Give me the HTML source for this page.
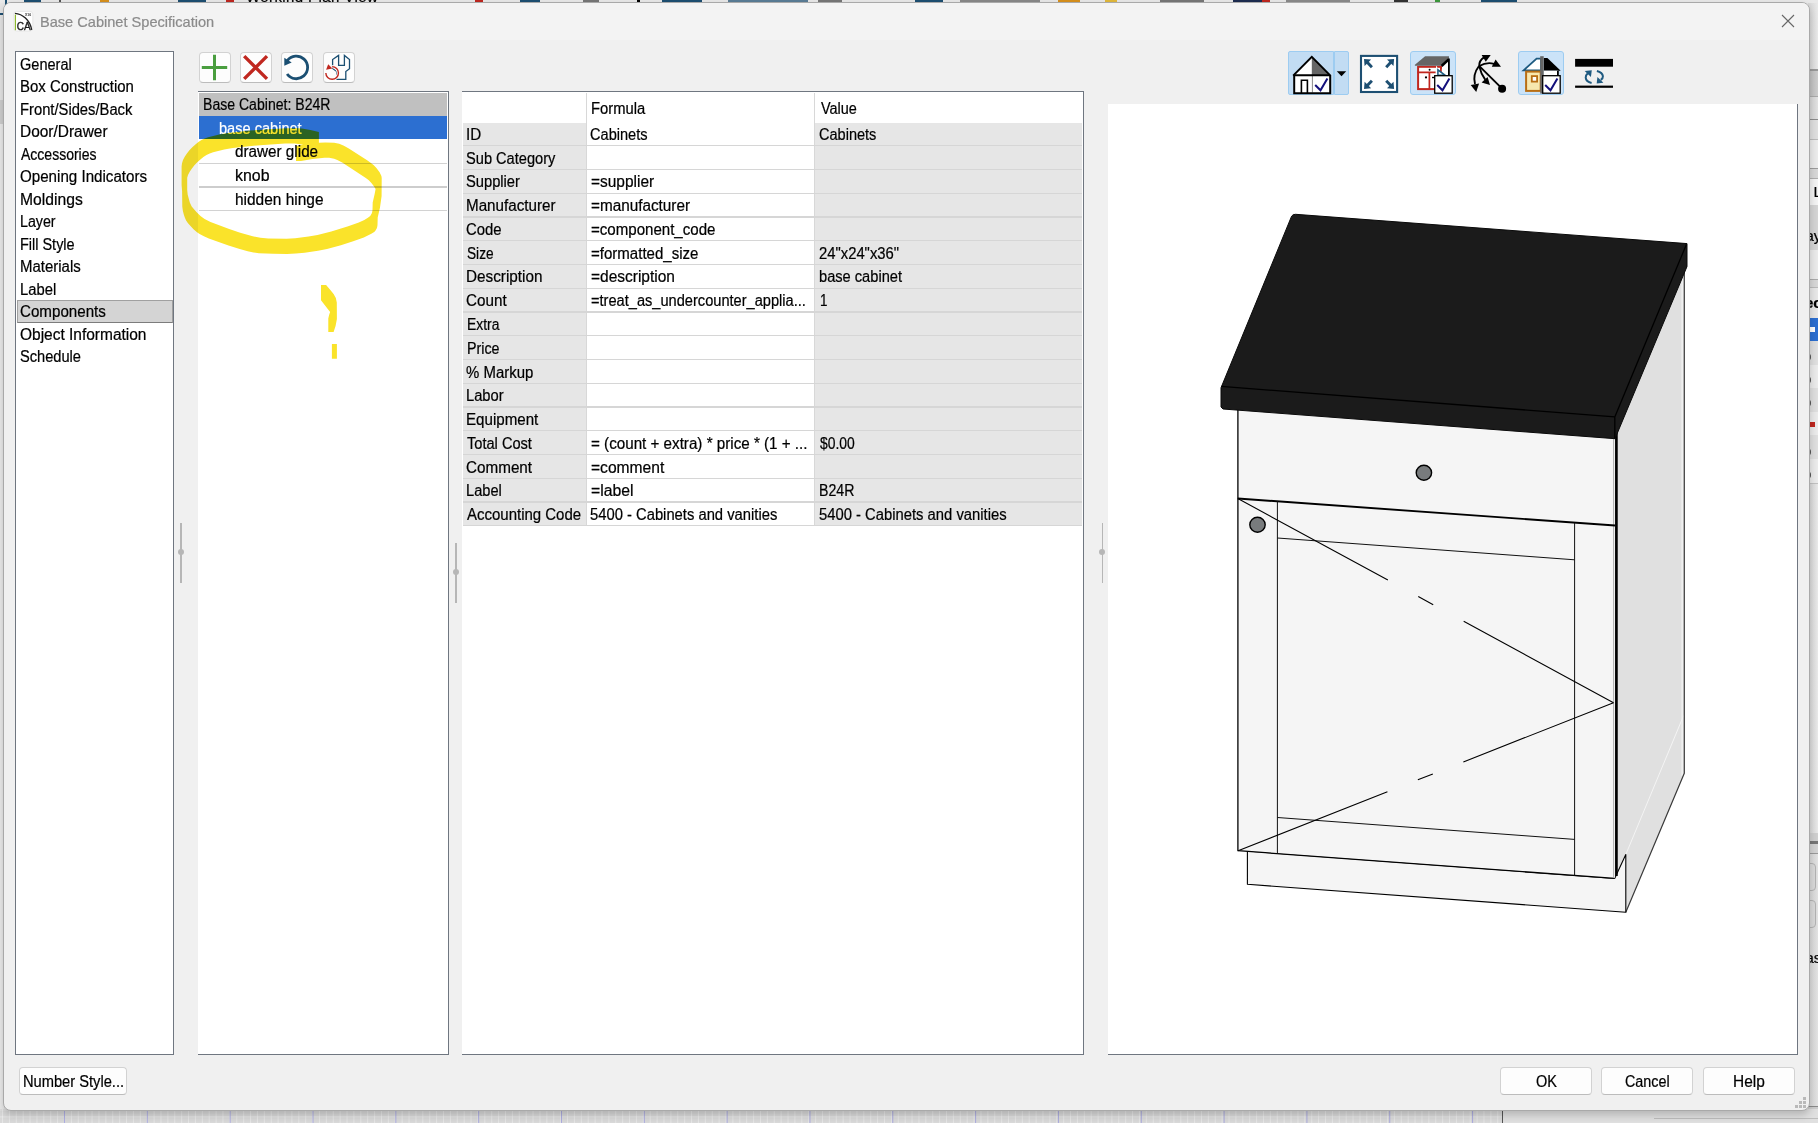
<!DOCTYPE html>
<html lang="en"><head><meta charset="utf-8"><title>Base Cabinet Specification</title>
<style>
html,body{margin:0;padding:0}
body{width:1818px;height:1123px;position:relative;overflow:hidden;background:#e4e4e4;font:16px/20px "Liberation Sans",sans-serif;color:#000}
.a{position:absolute}
.t{position:absolute;white-space:pre;transform-origin:0 0;font:16px/20px "Liberation Sans",sans-serif;-webkit-text-stroke:.22px currentColor}
#dlg{position:absolute;left:3px;top:2px;width:1805px;height:1107px;border:1px solid #a9a9a9;border-radius:8px;background:#f0f0f0;box-shadow:0 4px 9px rgba(0,0,0,.2)}
#ttl{position:absolute;left:4px;top:3px;width:1805px;height:37px;background:#f3f3f3;border-radius:7px 7px 0 0}
.pane{position:absolute;background:#fff;box-sizing:border-box;border-top:1px solid #6f7680;border-right:1px solid #6f7680;border-bottom:1px solid #6f7680}
.btn{position:absolute;box-sizing:border-box;background:#fdfdfd;border:1px solid #d2d2d2;border-bottom-color:#bcbcbc;border-radius:4px}
.g{position:absolute;background:#e6e6e6}
.hl{position:absolute;height:1px;background:#d6d6d6}
.sp{position:absolute;background:#b6b6b6}
.tb{position:absolute;box-sizing:border-box;background:#cbe3f8;border:1px solid #9dccf1;border-radius:3px}
svg{position:absolute;left:0;top:0;overflow:visible}

</style></head>
<body>
<!-- background application peeking around the dialog -->
<div class="a" style="left:0;top:0;width:1818px;height:3px;background:#e9e9e9"></div>
<div class="a" style="left:24px;top:0;width:17px;height:2px;background:#1d4f72"></div>
<div class="a" style="left:59px;top:0;width:2px;height:2px;background:#555"></div>
<div class="a" style="left:100px;top:0;width:9px;height:2px;background:#d8901c"></div>
<div class="a" style="left:178px;top:0;width:28px;height:2px;background:#1d4f72"></div>
<div class="a" style="left:226px;top:0;width:8px;height:2px;background:#c0271f"></div>
<div class="t" style="left:246px;top:-13px;font-size:15px;letter-spacing:.4px">Working Plan View</div>
<div class="a" style="left:475px;top:0;width:8px;height:2px;background:#c0271f"></div>
<div class="a" style="left:520px;top:0;width:20px;height:2px;background:#1d4f72"></div>
<div class="a" style="left:583px;top:0;width:16px;height:2px;background:#777"></div>
<div class="a" style="left:637px;top:0;width:3px;height:2px;background:#000"></div>
<div class="a" style="left:662px;top:0;width:40px;height:2px;background:#1d4f72"></div>
<div class="a" style="left:728px;top:0;width:80px;height:2px;background:#1d4f72;opacity:.7"></div>
<div class="a" style="left:818px;top:0;width:24px;height:2px;background:#777"></div>
<div class="a" style="left:915px;top:0;width:28px;height:2px;background:#1d4f72"></div>
<div class="a" style="left:960px;top:0;width:80px;height:2px;background:#888"></div>
<div class="a" style="left:1058px;top:0;width:22px;height:2px;background:#d8901c"></div>
<div class="a" style="left:1105px;top:0;width:12px;height:2px;background:#e2b93b"></div>
<div class="a" style="left:1160px;top:0;width:44px;height:2px;background:#777"></div>
<div class="a" style="left:1233px;top:0;width:30px;height:2px;background:#1d2c50"></div>
<div class="a" style="left:1262px;top:0;width:8px;height:2px;background:#c0271f"></div>
<div class="a" style="left:1286px;top:0;width:64px;height:2px;background:#8a8a8a"></div>
<div class="a" style="left:1394px;top:0;width:14px;height:2px;background:#333"></div>
<div class="a" style="left:1435px;top:0;width:5px;height:2px;background:#3c9a3c"></div>
<div class="a" style="left:1481px;top:0;width:36px;height:2px;background:#1d4f72"></div>
<div class="a" style="left:5px;top:0;width:2px;height:6px;background:#1d4f72"></div>
<!-- left sliver -->
<div class="a" style="left:0;top:3px;width:4px;height:1108px;background:#e6e6e6"></div>
<div class="a" style="left:0;top:13px;width:4px;height:2px;background:#1d4f72"></div>
<div class="a" style="left:0;top:100px;width:4px;height:24px;background:#cfcfcf"></div>
<div class="a" style="left:0;top:124px;width:4px;height:987px;background:#ececec"></div>
<!-- right sliver -->
<div class="a" style="left:1808px;top:3px;width:10px;height:1120px;background:linear-gradient(to right,#d6d6d6,#e9e9e9)"></div>
<div class="a" style="left:1808px;top:69px;width:10px;height:2px;background:#9a9a9a"></div>
<div class="a" style="left:1808px;top:71px;width:10px;height:25px;background:linear-gradient(to right,#bdbdbd,#cdcdcd)"></div>
<div class="a" style="left:1808px;top:96px;width:10px;height:1px;background:#aaa"></div>
<div class="a" style="left:1808px;top:97px;width:10px;height:22px;background:linear-gradient(to right,#d4d4d4,#e2e2e2)"></div>
<div class="a" style="left:1808px;top:119px;width:10px;height:1px;background:#8c8c8c"></div>
<div class="a" style="left:1808px;top:120px;width:10px;height:19px;background:#e0e0e0"></div>
<div class="a" style="left:1808px;top:139px;width:10px;height:1px;background:#bcbcbc"></div>
<div class="a" style="left:1808px;top:140px;width:10px;height:28px;background:#ececec"></div>
<div class="a" style="left:1808px;top:168px;width:10px;height:1px;background:#9c9c9c"></div>
<div class="a" style="left:1808px;top:169px;width:10px;height:9px;background:#d8d8d8"></div>
<div class="a" style="left:1808px;top:178px;width:10px;height:1px;background:#b0b0b0"></div>
<div class="a" style="left:1808px;top:179px;width:10px;height:26px;background:#f4f4f4"></div>
<div class="a" style="left:1808px;top:205px;width:10px;height:45px;background:#d5d5d5"></div>
<div class="a" style="left:1808px;top:250px;width:10px;height:29px;background:#ebebeb"></div>
<div class="a" style="left:1808px;top:279px;width:10px;height:1px;background:#aaa"></div>
<div class="a" style="left:1808px;top:280px;width:10px;height:7px;background:#d8d8d8"></div>
<div class="a" style="left:1808px;top:287px;width:10px;height:1px;background:#bbb"></div>
<div class="a" style="left:1808px;top:288px;width:10px;height:30px;background:#e8e8e8"></div>
<div class="a" style="left:1808px;top:318px;width:10px;height:23px;background:#2c6fd1"></div>
<div class="a" style="left:1809px;top:327px;width:6px;height:5px;background:#fff"></div>
<div class="a" style="left:1808px;top:341px;width:10px;height:24px;background:#e0e0e0"></div>
<div class="a" style="left:1808px;top:365px;width:10px;height:1px;background:#c2c2c2"></div>
<div class="a" style="left:1808px;top:365px;width:10px;height:23px;background:#ececec"></div>
<div class="a" style="left:1808px;top:388px;width:10px;height:1px;background:#c2c2c2"></div>
<div class="a" style="left:1808px;top:388px;width:10px;height:24px;background:#e0e0e0"></div>
<div class="a" style="left:1808px;top:412px;width:10px;height:1px;background:#c2c2c2"></div>
<div class="a" style="left:1808px;top:412px;width:10px;height:23px;background:#ececec"></div>
<div class="a" style="left:1808px;top:435px;width:10px;height:1px;background:#c2c2c2"></div>
<div class="a" style="left:1808px;top:435px;width:10px;height:24px;background:#e0e0e0"></div>
<div class="a" style="left:1808px;top:459px;width:10px;height:1px;background:#c2c2c2"></div>
<div class="a" style="left:1808px;top:459px;width:10px;height:24px;background:#ececec"></div>
<div class="a" style="left:1808px;top:483px;width:10px;height:1px;background:#c2c2c2"></div>
<div class="a" style="left:1807px;top:354px;width:4px;height:6px;border-radius:3px;background:#5a5a5a"></div>
<div class="a" style="left:1807px;top:377px;width:4px;height:6px;border-radius:3px;background:#5a5a5a"></div>
<div class="a" style="left:1807px;top:400px;width:4px;height:6px;border-radius:3px;background:#5a5a5a"></div>
<div class="a" style="left:1807px;top:449px;width:4px;height:6px;border-radius:3px;background:#5a5a5a"></div>
<div class="a" style="left:1807px;top:472px;width:4px;height:6px;border-radius:3px;background:#5a5a5a"></div>
<div class="a" style="left:1809px;top:422px;width:6px;height:5px;background:#c0271f"></div>
<div class="t" style="left:1813.5px;top:182.3px;font-size:15px">L</div>
<div class="t" style="left:1805.5px;top:226.3px;font-size:15px">ay</div>
<div class="t" style="left:1805px;top:293px;font-size:15px;font-weight:bold">ec</div>
<div class="a" style="left:1808px;top:833px;width:10px;height:8px;background:#d0d0d0"></div>
<div class="a" style="left:1808px;top:841px;width:10px;height:3px;background:#777"></div>
<div class="a" style="left:1808px;top:844px;width:10px;height:9px;background:#d4d4d4"></div>
<div class="a" style="left:1808px;top:853px;width:10px;height:1px;background:#9a9a9a"></div>
<div class="a" style="left:1808px;top:854px;width:10px;height:252px;background:linear-gradient(to right,#d8d8d8,#e2e2e2)"></div>
<div class="a" style="left:1798px;top:863px;width:16px;height:26px;border:1px solid #b4b4b4;border-radius:0 4px 4px 0;background:#dadada"></div>
<div class="a" style="left:1798px;top:900px;width:16px;height:26px;border:1px solid #b4b4b4;border-radius:0 4px 4px 0;background:#dadada"></div>
<div class="t" style="left:1805.5px;top:948.3px;font-size:15px">as</div>
<div class="a" style="left:1808px;top:1106px;width:10px;height:1px;background:#8a8a8a"></div>
<div class="a" style="left:1808px;top:1107px;width:10px;height:16px;background:#cdcdcd"></div>
<!-- bottom sliver: drawing grid -->
<div class="a" style="left:0;top:1109px;width:1502px;height:14px;background-color:#d9d9d9;background-image:linear-gradient(to right,rgba(150,150,225,.7) 1px,transparent 1px),linear-gradient(to right,rgba(255,255,255,.35) 1px,transparent 1px),linear-gradient(to bottom,rgba(255,255,255,.35) 1px,transparent 1px);background-size:82.83px 14px,6.9025px 14px,1502px 6.9025px;background-position:64px 0,2px 0,0 0.5px"></div>
<div class="a" style="left:1502px;top:1109px;width:1px;height:14px;background:#555"></div>
<div class="a" style="left:1503px;top:1109px;width:315px;height:14px;background:#e0e0e0"></div>
<div class="a" style="left:1654px;top:1118px;width:164px;height:1px;background:#bdbdbd"></div>

<div id="dlg"></div><div id="ttl"></div>
<svg width="1818" height="1123" viewBox="0 0 1818 1123">
<rect x="13.8" y="11.4" width="19" height="19.6" rx="2.8" fill="#fff" stroke="#e0e0e0" stroke-width=".7"/>
<path d="M14.9 13.4C22.5 14 29.8 19.8 31.7 29.8" fill="none" stroke="#222" stroke-width="1.4"/>
<rect x="14.8" y="14.6" width="1.2" height="15.6" fill="#8cb82e"/>
<text x="16.8" y="30.4" font-family="Liberation Sans, sans-serif" font-size="11.2" fill="#1a1a1a" stroke="#1a1a1a" stroke-width=".35" textLength="13.9" lengthAdjust="spacingAndGlyphs">CA</text>
<text x="25" y="15.6" font-family="Liberation Sans, sans-serif" font-size="3.3" font-weight="bold" fill="#333" textLength="6.2" lengthAdjust="spacingAndGlyphs">X16</text>
<path d="M1782 15 L1794 27 M1794 15 L1782 27" stroke="#666" stroke-width="1.1" fill="none"/>
</svg>
<div class="a" style="left:15px;top:51px;width:159px;height:1004px;box-sizing:border-box;background:#fff;border:1px solid #6f7680"></div>
<div class="a" style="left:17px;top:300px;width:156px;height:23px;box-sizing:border-box;background:#d4d4d4;border:1px solid #a0a0a0;border-bottom-color:#7c7c7c"></div>
<div class="btn" style="left:199px;top:52px;width:32px;height:31px"></div>
<div class="btn" style="left:240px;top:52px;width:32px;height:31px"></div>
<div class="btn" style="left:281px;top:52px;width:32px;height:31px"></div>
<div class="btn" style="left:323px;top:52px;width:32px;height:31px"></div>
<div class="pane" style="left:198px;top:91px;width:251px;height:964px"></div>
<div class="a" style="left:199px;top:93px;width:248px;height:23px;background:#c0c0c0"></div>
<div class="a" style="left:199px;top:116px;width:248px;height:23px;background:#2c6fd1"></div>
<div class="hl" style="left:199px;top:163px;width:248px;background:#d2d2d2"></div>
<div class="hl" style="left:199px;top:186px;width:248px;height:2px;background:#cdcdcd"></div>
<div class="hl" style="left:199px;top:210px;width:248px;background:#d2d2d2"></div>
<div class="pane" style="left:462px;top:91px;width:622px;height:964px"></div>
<div class="g" style="left:463px;top:123px;width:123px;height:402px"></div>
<div class="g" style="left:815px;top:123px;width:267px;height:402px"></div>
<div class="a" style="left:586px;top:93px;width:1px;height:432px;background:#d8d8d8"></div>
<div class="a" style="left:814px;top:93px;width:1px;height:432px;background:#d8d8d8"></div>
<div class="hl" style="left:463px;top:145px;width:619px;height:1px"></div>
<div class="hl" style="left:463px;top:169px;width:619px;height:1px"></div>
<div class="hl" style="left:463px;top:193px;width:619px;height:1px"></div>
<div class="hl" style="left:463px;top:216px;width:619px;height:2px"></div>
<div class="hl" style="left:463px;top:240px;width:619px;height:1px"></div>
<div class="hl" style="left:463px;top:264px;width:619px;height:1px"></div>
<div class="hl" style="left:463px;top:288px;width:619px;height:1px"></div>
<div class="hl" style="left:463px;top:311px;width:619px;height:2px"></div>
<div class="hl" style="left:463px;top:335px;width:619px;height:1px"></div>
<div class="hl" style="left:463px;top:359px;width:619px;height:1px"></div>
<div class="hl" style="left:463px;top:383px;width:619px;height:1px"></div>
<div class="hl" style="left:463px;top:406px;width:619px;height:2px"></div>
<div class="hl" style="left:463px;top:430px;width:619px;height:1px"></div>
<div class="hl" style="left:463px;top:454px;width:619px;height:1px"></div>
<div class="hl" style="left:463px;top:478px;width:619px;height:1px"></div>
<div class="hl" style="left:463px;top:501px;width:619px;height:2px"></div>
<div class="hl" style="left:463px;top:525px;width:619px;height:1px"></div>
<div class="a" style="left:1108px;top:104px;width:690px;height:951px;box-sizing:border-box;background:#fff;border-right:1px solid #6f7680;border-bottom:1px solid #6f7680"></div>
<div class="sp" style="left:180px;top:523px;width:2px;height:60px"></div><div class="sp" style="left:178px;top:549px;width:6px;height:6px;border-radius:3px"></div>
<div class="sp" style="left:455px;top:543px;width:2px;height:60px"></div><div class="sp" style="left:453px;top:569px;width:6px;height:6px;border-radius:3px"></div>
<div class="sp" style="left:1102px;top:523px;width:1px;height:60px"></div><div class="sp" style="left:1099px;top:549px;width:6px;height:6px;border-radius:3px"></div>
<div class="btn" style="left:19px;top:1067px;width:108px;height:28px"></div>
<div class="btn" style="left:1500px;top:1067px;width:92px;height:28px"></div>
<div class="btn" style="left:1601px;top:1067px;width:92px;height:28px"></div>
<div class="btn" style="left:1703px;top:1067px;width:92px;height:28px"></div>
<div class="a" style="left:1803px;top:1097px;width:3px;height:3px;background:#b9b9b9"></div>
<div class="a" style="left:1799px;top:1101px;width:3px;height:3px;background:#b9b9b9"></div>
<div class="a" style="left:1803px;top:1101px;width:3px;height:3px;background:#b9b9b9"></div>
<div class="a" style="left:1795px;top:1105px;width:3px;height:3px;background:#b9b9b9"></div>
<div class="a" style="left:1799px;top:1105px;width:3px;height:3px;background:#b9b9b9"></div>
<div class="a" style="left:1803px;top:1105px;width:3px;height:3px;background:#b9b9b9"></div>
<div class="tb" style="left:1288px;top:51px;width:46px;height:44px;background:#c2dcf3;border-radius:2px 0 0 2px"></div>
<div class="tb" style="left:1334px;top:51px;width:15px;height:44px;background:#c2dcf3;border-radius:0 2px 2px 0"></div>
<div class="tb" style="left:1410px;top:51px;width:46px;height:44px"></div>
<div class="tb" style="left:1518px;top:51px;width:46px;height:44px"></div>
<span class="t" style="left:39.53px;top:11.90px;transform:scaleX(0.9718);color:#8b8b8b;font-size:15px">Base Cabinet Specification</span>
<span class="t" style="left:19.89px;top:55.00px;transform:scaleX(0.9091)">General</span>
<span class="t" style="left:19.86px;top:77.47px;transform:scaleX(0.9350)">Box Construction</span>
<span class="t" style="left:19.88px;top:99.94px;transform:scaleX(0.9223)">Front/Sides/Back</span>
<span class="t" style="left:19.83px;top:122.41px;transform:scaleX(0.9652)">Door/Drawer</span>
<span class="t" style="left:20.80px;top:144.88px;transform:scaleX(0.8756)">Accessories</span>
<span class="t" style="left:19.85px;top:167.35px;transform:scaleX(0.9459)">Opening Indicators</span>
<span class="t" style="left:19.82px;top:189.82px;transform:scaleX(0.9794)">Moldings</span>
<span class="t" style="left:19.91px;top:212.29px;transform:scaleX(0.8897)">Layer</span>
<span class="t" style="left:19.90px;top:234.76px;transform:scaleX(0.9034)">Fill Style</span>
<span class="t" style="left:19.86px;top:257.23px;transform:scaleX(0.9359)">Materials</span>
<span class="t" style="left:19.88px;top:279.70px;transform:scaleX(0.9243)">Label</span>
<span class="t" style="left:19.85px;top:302.17px;transform:scaleX(0.9461)">Components</span>
<span class="t" style="left:19.83px;top:324.64px;transform:scaleX(0.9674)">Object Information</span>
<span class="t" style="left:19.89px;top:347.11px;transform:scaleX(0.9138)">Schedule</span>
<span class="t" style="left:202.52px;top:94.70px;transform:scaleX(0.8790)">Base Cabinet: B24R</span>
<span class="t" style="left:219.49px;top:118.50px;transform:scaleX(0.9111);color:#fff">base cabinet</span>
<span class="t" style="left:235.15px;top:142.20px;transform:scaleX(0.9535)">drawer glide</span>
<span class="t" style="left:235.11px;top:165.90px;transform:scaleX(0.9939)">knob</span>
<span class="t" style="left:235.13px;top:189.60px;transform:scaleX(0.9656)">hidden hinge</span>
<span class="t" style="left:466.45px;top:124.90px;transform:scaleX(0.9500)">ID</span>
<span class="t" style="left:466.49px;top:148.66px;transform:scaleX(0.9134)">Sub Category</span>
<span class="t" style="left:466.48px;top:172.42px;transform:scaleX(0.9190)">Supplier</span>
<span class="t" style="left:466.45px;top:196.18px;transform:scaleX(0.9495)">Manufacturer</span>
<span class="t" style="left:465.97px;top:219.94px;transform:scaleX(0.9297)">Code</span>
<span class="t" style="left:466.55px;top:243.70px;transform:scaleX(0.8533)">Size</span>
<span class="t" style="left:466.44px;top:267.46px;transform:scaleX(0.9551)">Description</span>
<span class="t" style="left:465.95px;top:291.22px;transform:scaleX(0.9524)">Count</span>
<span class="t" style="left:466.53px;top:314.98px;transform:scaleX(0.8667)">Extra</span>
<span class="t" style="left:466.51px;top:338.74px;transform:scaleX(0.8914)">Price</span>
<span class="t" style="left:466.47px;top:362.50px;transform:scaleX(0.9338)">% Markup</span>
<span class="t" style="left:466.48px;top:386.26px;transform:scaleX(0.9200)">Labor</span>
<span class="t" style="left:466.45px;top:410.02px;transform:scaleX(0.9453)">Equipment</span>
<span class="t" style="left:466.90px;top:433.78px;transform:scaleX(0.9127)">Total Cost</span>
<span class="t" style="left:465.95px;top:457.54px;transform:scaleX(0.9529)">Comment</span>
<span class="t" style="left:466.49px;top:481.30px;transform:scaleX(0.9135)">Label</span>
<span class="t" style="left:466.90px;top:505.06px;transform:scaleX(0.9364)">Accounting Code</span>
<span class="t" style="left:591.08px;top:98.70px;transform:scaleX(0.9224)">Formula</span>
<span class="t" style="left:821.00px;top:98.70px;transform:scaleX(0.9026)">Value</span>
<span class="t" style="left:590.09px;top:124.90px;transform:scaleX(0.9113)">Cabinets</span>
<span class="t" style="left:590.63px;top:172.42px;transform:scaleX(0.9656)">=supplier</span>
<span class="t" style="left:590.64px;top:196.18px;transform:scaleX(0.9559)">=manufacturer</span>
<span class="t" style="left:590.66px;top:219.94px;transform:scaleX(0.9420)">=component_code</span>
<span class="t" style="left:590.66px;top:243.70px;transform:scaleX(0.9398)">=formatted_size</span>
<span class="t" style="left:590.63px;top:267.46px;transform:scaleX(0.9682)">=description</span>
<span class="t" style="left:590.69px;top:291.22px;transform:scaleX(0.9133)">=treat_as_undercounter_applia...</span>
<span class="t" style="left:590.65px;top:433.78px;transform:scaleX(0.9491)">= (count + extra) * price * (1 + ...</span>
<span class="t" style="left:590.63px;top:457.54px;transform:scaleX(0.9743)">=comment</span>
<span class="t" style="left:590.61px;top:481.30px;transform:scaleX(0.9854)">=label</span>
<span class="t" style="left:589.98px;top:505.06px;transform:scaleX(0.9234)">5400 - Cabinets and vanities</span>
<span class="t" style="left:818.79px;top:124.90px;transform:scaleX(0.9081)">Cabinets</span>
<span class="t" style="left:818.77px;top:243.70px;transform:scaleX(0.9259)">24&quot;x24&quot;x36&quot;</span>
<span class="t" style="left:818.79px;top:267.46px;transform:scaleX(0.9144)">base cabinet</span>
<span class="t" style="left:819.86px;top:291.22px;transform:scaleX(0.8429)">1</span>
<span class="t" style="left:819.70px;top:433.78px;transform:scaleX(0.8675)">$0.00</span>
<span class="t" style="left:818.82px;top:481.30px;transform:scaleX(0.8842)">B24R</span>
<span class="t" style="left:818.78px;top:505.06px;transform:scaleX(0.9249)">5400 - Cabinets and vanities</span>
<span class="t" style="left:22.58px;top:1071.70px;transform:scaleX(0.9167)">Number Style...</span>
<span class="t" style="left:1535.60px;top:1071.70px;transform:scaleX(0.9045)">OK</span>
<span class="t" style="left:1625.10px;top:1071.70px;transform:scaleX(0.8979)">Cancel</span>
<span class="t" style="left:1732.94px;top:1071.70px;transform:scaleX(0.9645)">Help</span>
<svg width="1818" height="1123" viewBox="0 0 1818 1123" fill="none">
<!-- add -->
<path d="M201.8 67.5H227.2M214.5 54.8V80.2" stroke="#4a9e3f" stroke-width="3"/>
<!-- delete -->
<path d="M244.2 56.1L267 78.9M267 56.1L244.2 78.9" stroke="#c0271f" stroke-width="3.4"/>
<!-- refresh -->
<path d="M287.3 60.6A11.3 11.3 0 1 1 287.1 73.96" stroke="#1b4f72" stroke-width="2.8"/>
<path d="M284.3 57.7V65.8L291.7 62.6Z" fill="#1b4f72"/>
<!-- restore tool -->
<path d="M338.6 55.4L332.6 59.55V68.5L336.8 71.6V79.4H345.8V71.6L349.5 68.8V59.55L344.4 55.4V65.3H338.6Z" stroke="#1b4f72" stroke-width="1.3" fill="none"/>
<path d="M332.15 66.65A6.3 6.3 0 1 1 325.85 72.95" stroke="#fdfdfd" stroke-width="3.4"/>
<path d="M332.15 66.65A6.3 6.3 0 1 1 325.85 72.95" stroke="#c0271f" stroke-width="1.4"/>
<path d="M328.2 64.2L326.1 69.7L332.4 68.6Z" fill="#c0271f"/>

<!-- 3D toolbar: 1 house / check -->
<path d="M1293.2 75.3L1311.8 56.6L1330.4 75.3Z" fill="#fff"/>
<path d="M1311.8 56.6L1330.4 75.3H1311.8Z" fill="#666"/>
<rect x="1293.6" y="75.3" width="36.6" height="17.6" fill="#fff"/>
<path d="M1312.4 76V92.6" stroke="#8a8a8a" stroke-width="1"/>
<path d="M1293.2 75.6L1311.8 56.9L1330.4 75.6" stroke="#000" stroke-width="2"/>
<path d="M1293.8 75.3H1330M1294.2 75V93.2H1330.2V75" stroke="#000" stroke-width="2"/>
<path d="M1301.4 93V80.2H1307.4V93" stroke="#000" stroke-width="1.6"/>
<path d="M1315.2 85L1320.5 90.3L1327.4 78.5" stroke="#14107c" stroke-width="2"/>
<path d="M1336.8 71.2H1346.2L1341.5 76.2Z" fill="#000"/>
<!-- 2 fit -->
<rect x="1361" y="55.9" width="36.1" height="36.1" fill="#fff" stroke="#1d4f72" stroke-width="2.1"/>
<g fill="#1d4f72" stroke="#1d4f72" stroke-width="2.9">
<path d="M1364 58.9L1371.1 59.6L1364.6 66.1Z" stroke="none"/><path d="M1366.8 61.8L1371.9 67.2"/>
<path d="M1394.1 58.9L1387 59.6L1393.5 66.1Z" stroke="none"/><path d="M1391.3 61.8L1386.2 67.2"/>
<path d="M1364 89L1371.1 88.3L1364.6 81.8Z" stroke="none"/><path d="M1366.8 86.1L1371.9 80.7"/>
<path d="M1394.1 89L1387 88.3L1393.5 81.8Z" stroke="none"/><path d="M1391.3 86.1L1386.2 80.7"/>
</g>
<!-- 3 cabinet / check -->
<rect x="1418.1" y="66.8" width="22.9" height="22.3" fill="#fff" stroke="#c0271f" stroke-width="2"/>
<path d="M1417.5 72.3H1435.6M1429.4 72.3V90" stroke="#c0271f" stroke-width="1.7"/>
<circle cx="1429.6" cy="69.8" r="1" fill="#000"/><circle cx="1426" cy="77.4" r="1.1" fill="#000"/><path d="M1432 77.5H1435" stroke="#000" stroke-width="1.4"/>
<path d="M1441.8 66.8L1448.2 60.8V75.6H1441.8Z" fill="#fff"/>
<path d="M1436 65L1438.4 69.6L1436 69.6Z" fill="#fff"/>
<path d="M1438.2 66H1442V69.2Z" fill="#c0271f"/>
<path d="M1437.9 69.8V75.2L1444.6 74.9Z" fill="#f4f8fb" stroke="#1d5a80" stroke-width="1.5"/>
<path d="M1414.9 64.7L1425.1 56.2H1449V58.6L1441.2 65.8H1414.9Z" fill="#666"/>
<path d="M1441.6 66L1448.7 59.4" stroke="#000" stroke-width="2.6"/>
<path d="M1448.9 58.6V75.6" stroke="#000" stroke-width="1.8"/>
<rect x="1434.7" y="75.7" width="17.5" height="17.5" fill="#fff" stroke="#000" stroke-width="1.3"/>
<path d="M1437.2 85L1442.5 90.3L1449.4 78.5" stroke="#14107c" stroke-width="2"/>
<!-- 4 orbit arrows -->
<g stroke="#000" stroke-width="1.9">
<path d="M1479.1 65.8L1502.1 88.7"/>
<path d="M1479.2 66.2C1479 62 1480.6 59.6 1484 57.4"/>
<path d="M1479.3 66C1484.5 63 1489.5 62.6 1494 63.8"/>
<path d="M1479 66C1474 72.5 1473.6 78.6 1475 84"/>
<path d="M1479.3 66.4C1480.4 71.5 1482 75.4 1485.2 79.6"/>
</g>
<g fill="#000">
<circle cx="1502.1" cy="88.7" r="4"/>
<path d="M1481.6 55.1H1490.7L1485.8 61.8Z"/>
<path d="M1495.6 59.4L1501 66.7H1491.8Z"/>
<path d="M1470.7 85L1479.1 83.4L1476.2 91.9Z"/>
<path d="M1487.6 76.9L1490 85L1481.6 82.5Z"/>
</g>
<!-- 5 colored house / check -->
<path d="M1523.6 70.4L1536.6 58.7H1541V70.4Z" fill="#fff" stroke="#1d5a80" stroke-width="1.8"/>
<path d="M1543.8 58H1547.4L1560.7 70.7H1543.8Z" fill="#000"/>
<rect x="1526.1" y="71.6" width="14.6" height="19.3" fill="#f7e7ae" stroke="#b86e14" stroke-width="2"/>
<rect x="1531.8" y="76.1" width="5.3" height="5.5" fill="#fff" stroke="#b86e14" stroke-width="1.8"/>
<rect x="1543.8" y="70.7" width="14" height="5.2" fill="#fff"/>
<path d="M1557.9 70.7V76" stroke="#000" stroke-width="1.8"/>
<rect x="1540.2" y="56.2" width="3.5" height="37.4" fill="#666"/>
<rect x="1542.7" y="75.7" width="17.5" height="17.5" fill="#fff" stroke="#000" stroke-width="1.3"/>
<path d="M1545.2 85L1550.5 90.3L1557.4 78.5" stroke="#14107c" stroke-width="2"/>
<!-- 6 bar rotate -->
<rect x="1575.1" y="58.9" width="37.9" height="7.8" fill="#000"/>
<rect x="1575.1" y="85.6" width="37.9" height="2.2" fill="#000"/>
<path d="M1591.6 82.9C1588.4 82.2 1585.9 80.6 1585.7 77.6C1585.6 75.8 1586.4 74.4 1587.8 73.2" stroke="#1f5a80" stroke-width="2"/>
<path d="M1584.7 71.1L1591.8 70.3L1590.9 76.9Z" fill="#1f5a80"/>
<path d="M1596.9 70.9C1600 71.6 1602.6 73.4 1602.9 76.2C1603 77.8 1602.2 79 1600.8 79.9" stroke="#1f5a80" stroke-width="2"/>
<path d="M1597.4 76.9L1603.4 82.7L1596.7 83.6Z" fill="#1f5a80"/>
</svg>

<svg width="1818" height="1123" viewBox="0 0 1818 1123" fill="none" stroke-linejoin="round">
<path d="M1617.9 430L1684.5 270V773.3L1625.6 912.2V854.5L1616.5 874.8Z" fill="#e0e0e0"/>
<path d="M1682.4 276V776" stroke="#f0f0f0" stroke-width="2"/>
<path d="M1683.6 715.6L1625.8 854.5" stroke="#f4f4f4" stroke-width="1"/>
<path d="M1684.3 268V773.3L1625.8 912.2" stroke="#3a3a3a" stroke-width="1.2"/>
<path d="M1247.4 851L1614.8 878.4L1616.4 874.8L1625.8 854.5V912.2L1247.4 884.3Z" fill="#f5f5f5" stroke="#000" stroke-width="1.1"/>
<path d="M1237.8 408L1615 436V878.4L1238.1 850.7Z" fill="#f5f5f5"/>
<path d="M1237.9 408V850.7L1614.8 878.4" stroke="#000" stroke-width="1.3"/>
<path d="M1616.4 430V876" stroke="#000" stroke-width="2.7"/>
<path d="M1613.6 437V878" stroke="#9a9a9a" stroke-width=".8"/>
<path d="M1237.8 498.5L1615 525.5" stroke="#000" stroke-width="1.9"/>
<path d="M1277.4 501.3V853.6M1574.6 522.6V875.4M1277.4 538L1574.6 559.8M1277.4 817.5L1574.6 839.4" stroke="#111" stroke-width="1"/>
<path d="M1237.8 498.5L1613.5 702.7" stroke="#000" stroke-width="1.1" stroke-dasharray="170.8 34.6 17 34.7 200"/>
<path d="M1613.5 702.7L1238.1 850.7" stroke="#000" stroke-width="1.1" stroke-dasharray="161.4 32.8 16.1 32.7 200"/>
<ellipse cx="1423.9" cy="472.8" rx="7.7" ry="7.5" fill="#787b7d" stroke="#000" stroke-width="1.4"/>
<ellipse cx="1257.5" cy="524.8" rx="7.7" ry="7.5" fill="#787b7d" stroke="#000" stroke-width="1.4"/>
<path d="M1295.6 214.3L1687 243.6V266.5L1615 438.7L1223 409L1221 407V387.8L1291.6 216.2Q1292.8 214.1 1295.6 214.3Z" fill="#1b1b1b" stroke="#0a0a0a" stroke-width="1"/>
<path d="M1221.4 386.4L1614.8 416.9L1686.4 244.4M1614.8 416.9V438.4" stroke="#000" stroke-width="1.3"/>
</svg>
<svg width="1818" height="1123" viewBox="0 0 1818 1123" style="mix-blend-mode:multiply">
<path d="M182.0 163.2L181.6 166.6L181.6 184.9L182.1 191.3L182.3 206.7L182.9 211.0L183.8 214.5L184.8 217.6L186.1 220.5L188.0 223.2L193.5 229.2L197.0 232.3L199.6 234.0L203.9 236.3L208.8 238.4L228.5 245.5L239.7 249.1L247.7 251.3L253.5 252.5L258.9 253.2L273.3 253.8L287.0 253.9L295.9 253.6L304.6 252.8L318.0 250.8L327.0 248.9L340.9 245.2L353.2 241.3L363.8 237.4L371.3 233.8L374.2 231.9L375.2 230.9L376.7 228.5L377.2 226.9L377.5 225.1L377.7 217.5L380.0 207.5L381.6 196.1L381.7 177.9L381.4 175.9L379.6 172.3L376.4 168.0L373.8 165.3L371.9 163.8L367.5 160.6L348.8 148.4L343.9 145.7L339.2 143.7L334.1 142.7L325.4 142.5L318.9 142.7L318.9 132.0L310.4 130.1L301.8 128.6L297.5 128.3L286.8 128.3L268.7 129.2L250.5 130.6L227.7 132.9L219.2 134.4L208.1 137.3L204.7 138.5L201.5 140.1L198.4 142.0L195.4 144.4L192.3 147.2L189.4 150.3L186.9 153.5L184.7 156.8L183.0 160.0ZM260.4 237.8L252.7 236.3L240.2 232.7L229.2 229.0L210.5 222.0L204.6 219.0L200.8 216.3L196.4 212.0L191.7 206.4L189.8 202.6L187.7 194.7L187.2 190.1L187.2 177.7L188.0 175.0L189.7 171.8L191.9 168.5L194.4 165.3L197.3 162.2L200.4 159.4L203.4 157.0L206.5 155.1L209.7 153.5L213.1 152.3L224.2 149.4L232.7 147.9L260.2 145.2L285.1 143.6L294.8 143.4L303.2 144.7L296.0 145.9L296.0 160.9L301.0 160.9L312.5 159.0L324.5 157.7L329.1 157.7L334.2 158.7L337.3 159.9L342.2 162.4L365.8 177.9L368.8 180.3L371.4 183.0L373.9 186.3L375.6 189.1L374.6 194.3L372.7 202.5L372.5 210.1L372.2 211.9L371.7 213.5L370.2 215.9L367.9 217.8L364.3 219.9L358.8 222.4L348.2 226.3L331.3 231.5L317.5 234.9L308.6 236.5L295.2 238.2L286.5 238.8L268.2 238.5Z" fill="#fae32a" fill-rule="evenodd"/>
<path d="M321 285H326.1Q331 290.6 333.6 294Q336.6 298 336.8 302.6L336.9 319Q336 326 333.6 331.9H328.3V318.5Q328.9 315 330.1 311.9L321 300.3ZM331.9 343.9H336.9V358.8H331.9Z" fill="#fae32a"/>
</svg>
</body></html>
